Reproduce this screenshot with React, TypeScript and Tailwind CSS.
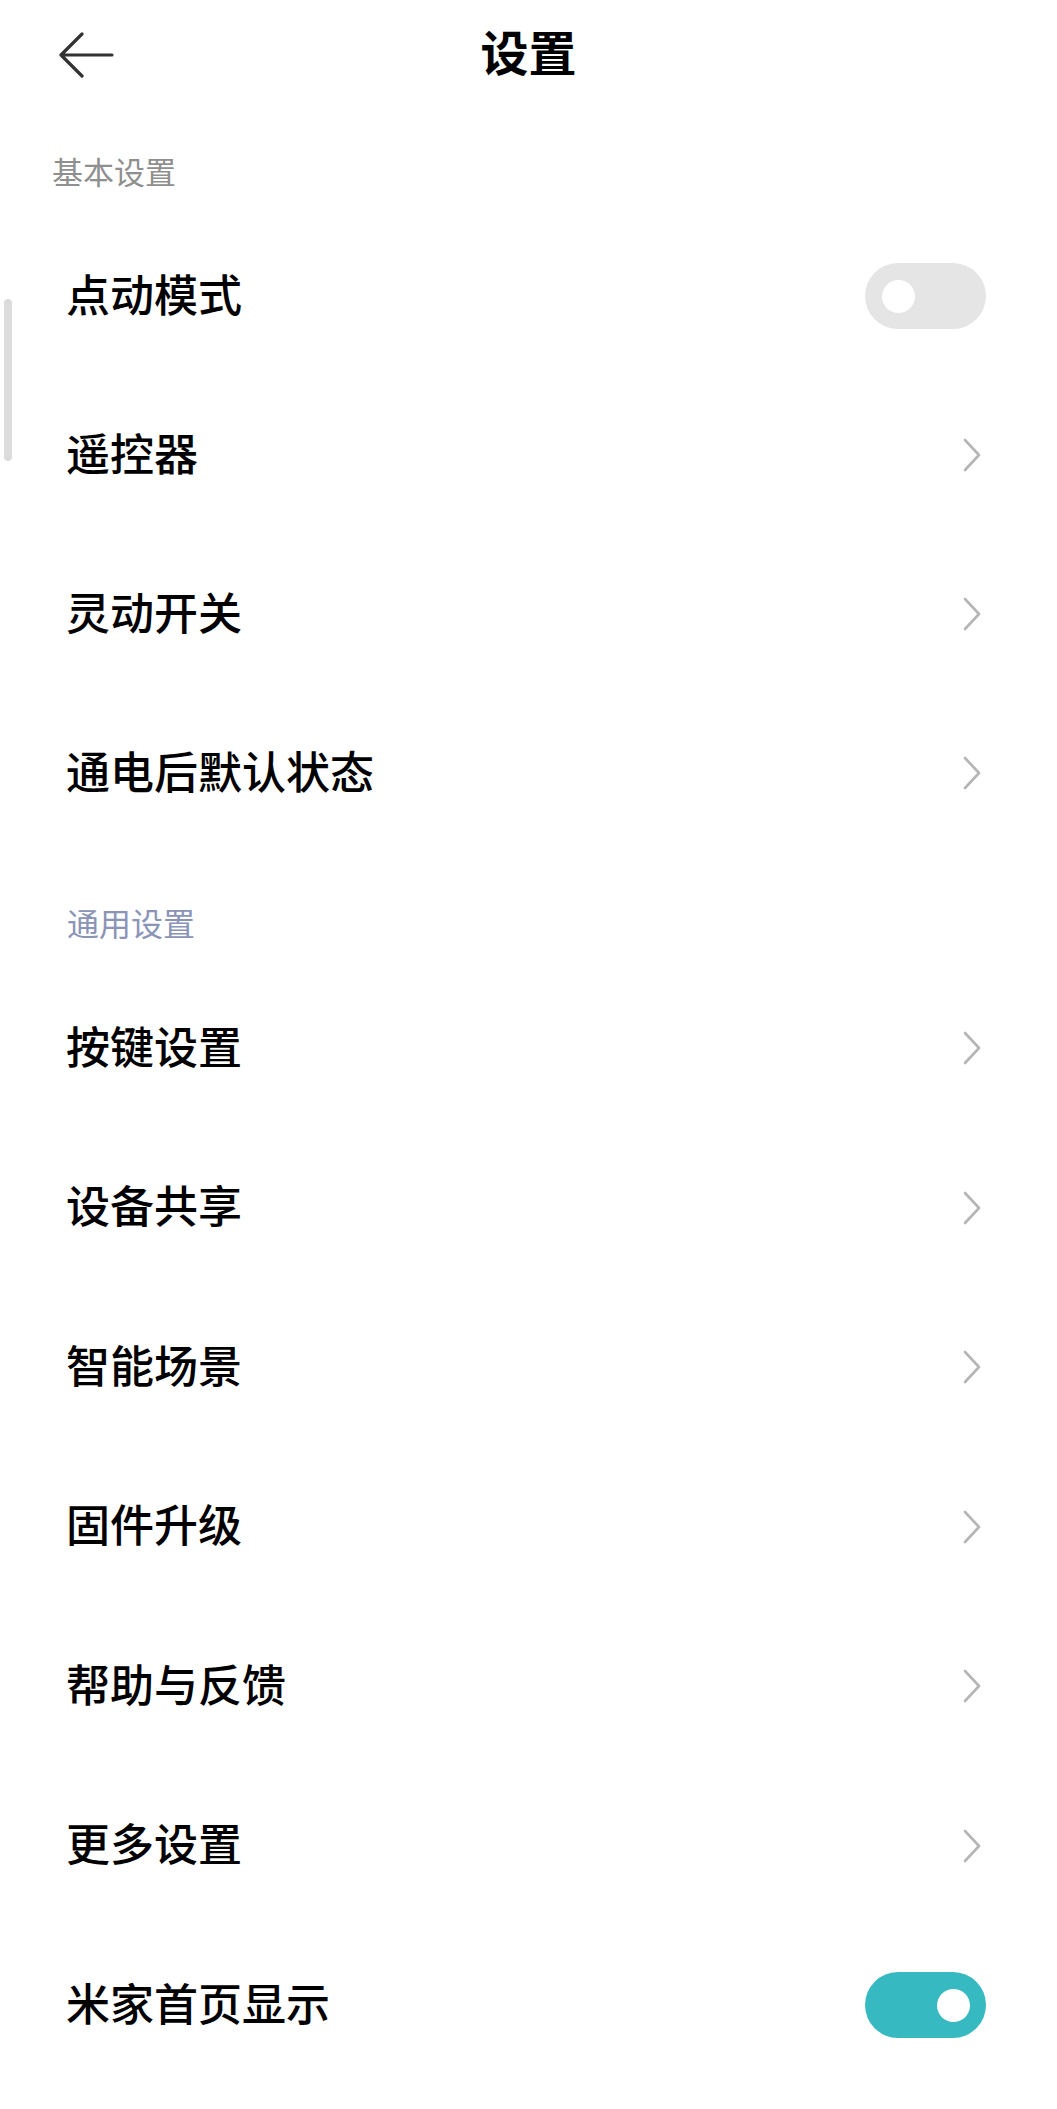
import { ReactNode } from "react"

const FONT = "font-['Noto_Sans_CJK_SC','Noto_Sans',sans-serif]"

function BackArrow() {
    return (
        <svg width="56" height="46" viewBox="0 0 56 46" fill="none">
            <path
                d="M2 23 H53 M23 2 L2 23 L23 44"
                stroke="#333333"
                strokeWidth="3.2"
                strokeLinecap="round"
                strokeLinejoin="round"
            />
        </svg>
    )
}

function Chevron() {
    return (
        <svg width="20" height="34" viewBox="0 0 20 34" fill="none" className="mr-[4px]">
            <path
                d="M3 2 L17 17 L3 32"
                stroke="#b5b5b5"
                strokeWidth="2.6"
                strokeLinecap="round"
                strokeLinejoin="round"
            />
        </svg>
    )
}

function Toggle({ on }: { on: boolean }) {
    return (
        <div
            className={
                on
                    ? "flex h-[66px] w-[121px] items-center justify-end rounded-full bg-[#36b9c1] pr-[16px]"
                    : "flex h-[66px] w-[121px] items-center justify-start rounded-full bg-[#e5e5e5] pl-[17px]"
            }
        >
            <div className="h-[33px] w-[33px] rounded-full bg-white" />
        </div>
    )
}

function Row({ label, right, tall }: { label: string; right: ReactNode; tall?: boolean }) {
    return (
        <div
            className={
                (tall ? "h-[159.5px]" : "h-[159px]") +
                " flex items-center justify-between pl-[66px] pr-[71px]"
            }
        >
            <span className="pb-[7px] text-[44px] font-medium leading-none text-black">{label}</span>
            {right}
        </div>
    )
}

export default function App() {
    const basic: { label: string; right: ReactNode }[] = [
        { label: "点动模式", right: <Toggle on={false} /> },
        { label: "遥控器", right: <Chevron /> },
        { label: "灵动开关", right: <Chevron /> },
        { label: "通电后默认状态", right: <Chevron /> },
    ]
    const general: { label: string; right: ReactNode }[] = [
        { label: "按键设置", right: <Chevron /> },
        { label: "设备共享", right: <Chevron /> },
        { label: "智能场景", right: <Chevron /> },
        { label: "固件升级", right: <Chevron /> },
        { label: "帮助与反馈", right: <Chevron /> },
        { label: "更多设置", right: <Chevron /> },
        { label: "米家首页显示", right: <Toggle on={true} /> },
    ]

    return (
        <div className={`relative min-h-[2109px] w-full bg-white ${FONT}`}>
            {/* scroll indicator */}
            <div className="absolute left-[4px] top-[299px] h-[162px] w-[8px] rounded-full bg-[#dcdcdc]" />

            <header className="grid h-[110px] grid-cols-[1fr_auto_1fr] items-center">
                <div className="pl-[59px]">
                    <BackArrow />
                </div>
                <h1 className="pb-[10px] text-[48px] font-bold leading-none text-black">设置</h1>
                <div />
            </header>

            <div className="flex h-[106.5px] items-start pl-[52px] pt-[45px]">
                <span className="text-[31px] leading-[32px] text-[#8f8f8f]">基本设置</span>
            </div>
            {basic.map((r) => (
                <Row key={r.label} label={r.label} right={r.right} />
            ))}

            <div className="flex h-[116px] items-start pl-[67px] pt-[53px]">
                <span className="text-[32px] leading-[32px] text-[#8a94b6]">通用设置</span>
            </div>
            {general.map((r) => (
                <Row key={r.label} label={r.label} right={r.right} tall />
            ))}
        </div>
    )
}
